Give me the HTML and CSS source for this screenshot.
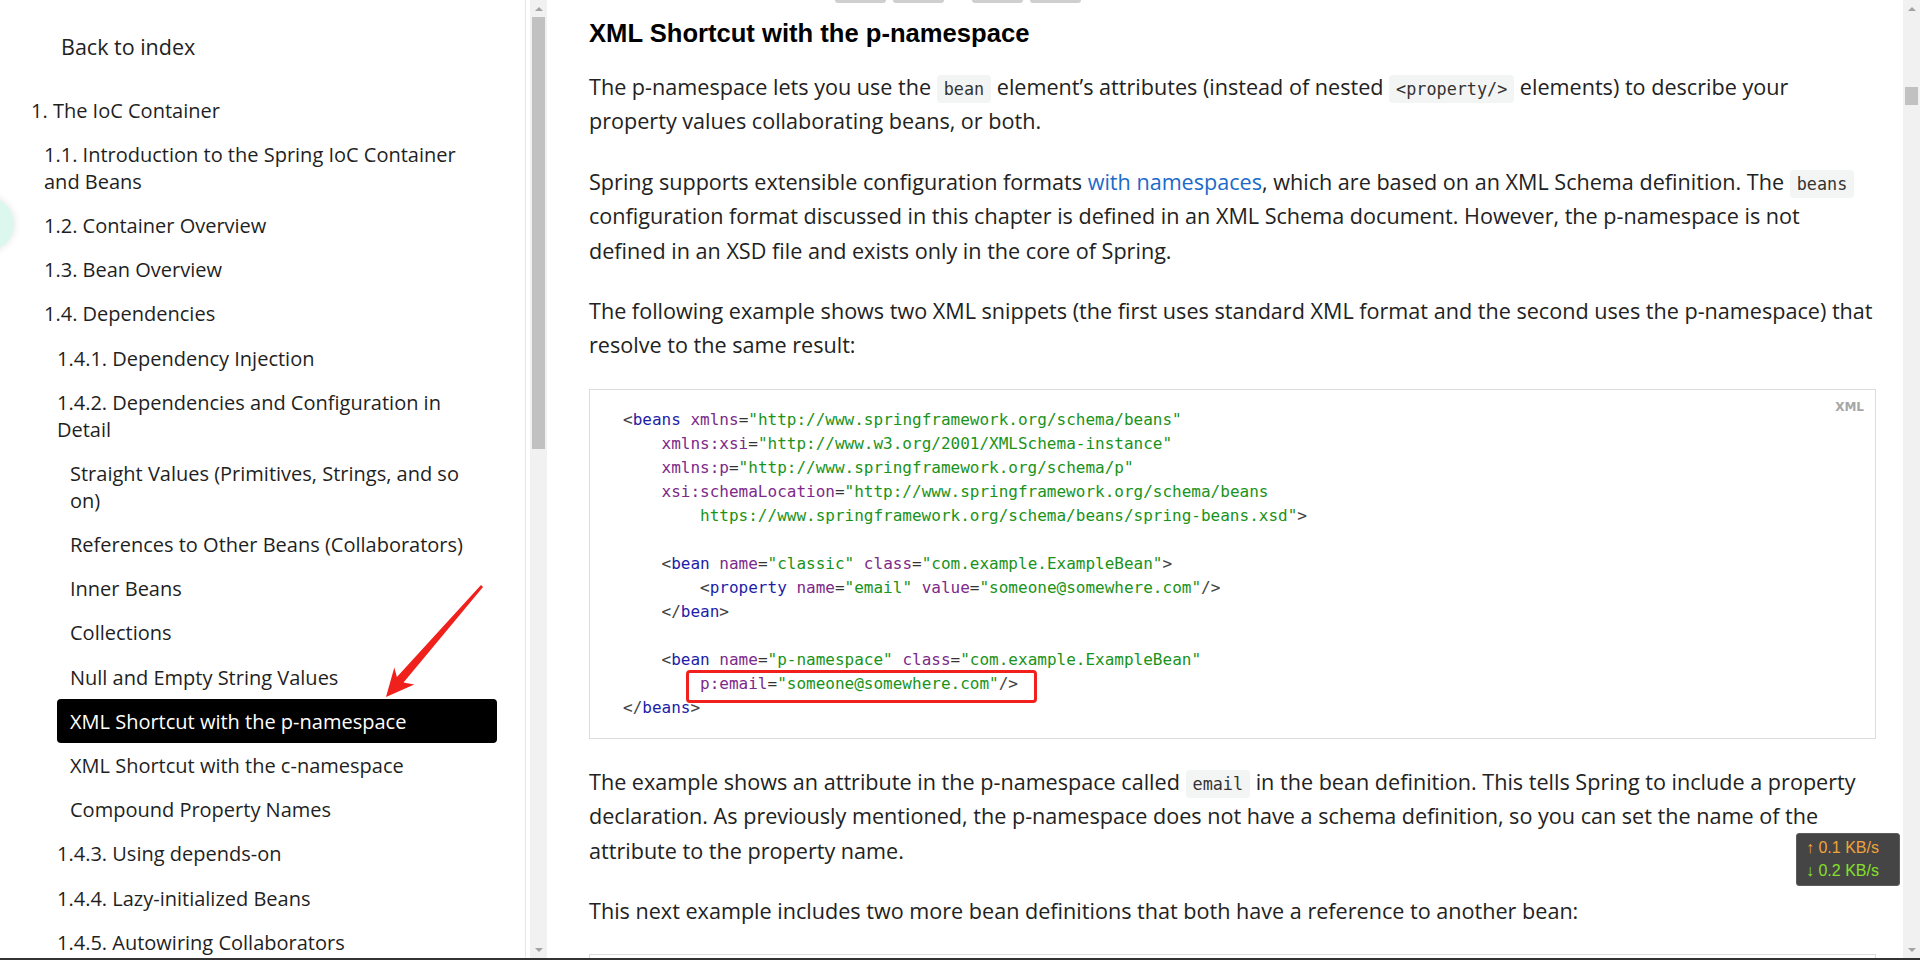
FILE: index.html
```html
<!DOCTYPE html>
<html lang="en">
<head>
<meta charset="utf-8">
<title>The IoC Container</title>
<link rel="stylesheet" href="styles.css">
</head>
<body>
<div class="app">
  <aside class="sidebar">
    <a class="back" href="#">Back to index</a>
    <nav class="toc">
      <ul>
        <li><a href="#">1. The IoC Container</a>
          <ul>
            <li><a href="#">1.1. Introduction to the Spring IoC Container and Beans</a></li>
            <li><a href="#">1.2. Container Overview</a></li>
            <li><a href="#">1.3. Bean Overview</a></li>
            <li><a href="#">1.4. Dependencies</a>
              <ul>
                <li><a href="#">1.4.1. Dependency Injection</a></li>
                <li><a href="#">1.4.2. Dependencies and Configuration in Detail</a>
                  <ul>
                    <li><a href="#">Straight Values (Primitives, Strings, and so on)</a></li>
                    <li><a href="#">References to Other Beans (Collaborators)</a></li>
                    <li><a href="#">Inner Beans</a></li>
                    <li><a href="#">Collections</a></li>
                    <li><a href="#">Null and Empty String Values</a></li>
                    <li><a href="#" class="active">XML Shortcut with the p-namespace</a></li>
                    <li><a href="#">XML Shortcut with the c-namespace</a></li>
                    <li><a href="#">Compound Property Names</a></li>
                  </ul>
                </li>
                <li><a href="#">1.4.3. Using depends-on</a></li>
                <li><a href="#">1.4.4. Lazy-initialized Beans</a></li>
                <li><a href="#">1.4.5. Autowiring Collaborators</a></li>
                <li><a href="#">1.4.6. Method Injection</a></li>
              </ul>
            </li>
          </ul>
        </li>
      </ul>
    </nav>
  </aside>

  <div class="vscroll side-scroll">
    <div class="sbtn"><span class="tri-up"></span></div>
    <div class="thumb"></div>
    <div class="track"></div>
    <div class="sbtn"><span class="tri-down"></span></div>
  </div>

  <main class="main">
    <div class="cut-buttons">
      <span class="cut"></span><span class="cut"></span><span class="cut wide-gap"></span><span class="cut"></span>
    </div>
    <h4 class="sect-title">XML Shortcut with the p-namespace</h4>
    <p>The p-namespace lets you use the <code>bean</code> element’s attributes (instead of nested <code>&lt;property/&gt;</code> elements) to describe your property values collaborating beans, or both.</p>
    <p>Spring supports extensible configuration formats <a href="#" class="link">with namespaces</a>, which are based on an XML Schema definition. The <code>beans</code> configuration format discussed in this chapter is defined in an XML Schema document. However, the p-namespace is not defined in an XSD file and exists only in the core of Spring.</p>
    <p>The following example shows two XML snippets (the first uses standard XML format and the second uses the p-namespace) that resolve to the same result:</p>
    <div class="listing">
      <span class="lang">XML</span>
<pre><span class="p">&lt;</span><span class="t">beans</span> <span class="a">xmlns</span>=<span class="s">"http://www.springframework.org/schema/beans"</span>
    <span class="a">xmlns:xsi</span>=<span class="s">"http://www.w3.org/2001/XMLSchema-instance"</span>
    <span class="a">xmlns:p</span>=<span class="s">"http://www.springframework.org/schema/p"</span>
    <span class="a">xsi:schemaLocation</span>=<span class="s">"http://www.springframework.org/schema/beans
        https://www.springframework.org/schema/beans/spring-beans.xsd"</span><span class="p">&gt;</span>

    <span class="p">&lt;</span><span class="t">bean</span> <span class="a">name</span>=<span class="s">"classic"</span> <span class="a">class</span>=<span class="s">"com.example.ExampleBean"</span><span class="p">&gt;</span>
        <span class="p">&lt;</span><span class="t">property</span> <span class="a">name</span>=<span class="s">"email"</span> <span class="a">value</span>=<span class="s">"someone@somewhere.com"</span><span class="p">/&gt;</span>
    <span class="p">&lt;/</span><span class="t">bean</span><span class="p">&gt;</span>

    <span class="p">&lt;</span><span class="t">bean</span> <span class="a">name</span>=<span class="s">"p-namespace"</span> <span class="a">class</span>=<span class="s">"com.example.ExampleBean"</span>
        <span class="hl"><span class="a">p:email</span>=<span class="s">"someone@somewhere.com"</span><span class="p">/&gt;</span></span>
<span class="p">&lt;/</span><span class="t">beans</span><span class="p">&gt;</span></pre>
    </div>
    <p>The example shows an attribute in the p-namespace called <code>email</code> in the bean definition. This tells Spring to include a property declaration. As previously mentioned, the p-namespace does not have a schema definition, so you can set the name of the attribute to the property name.</p>
    <p>This next example includes two more bean definitions that both have a reference to another bean:</p>
    <div class="listing"><pre> </pre></div>
  </main>

  <div class="vscroll page-scroll">
    <div class="sbtn"><span class="tri-up"></span></div>
    <div class="thumb"></div>
    <div class="track"></div>
    <div class="sbtn"><span class="tri-down"></span></div>
  </div>
</div>
<div class="bottom-edge"></div>

<div class="mint"></div>
<div class="net">
  <div class="up">↑ 0.1 KB/s</div>
  <div class="down">↓ 0.2 KB/s</div>
</div>
<svg class="annot" width="1920" height="960" viewBox="0 0 1920 960">
  <polygon fill="#f0201c" points="386,697 414.3,684.4 403.5,682.4 483,586.9 481,585.1 396.9,677.1 394.3,667.4"/>
</svg>
</body>
</html>
```

FILE: styles.css
```css
* { box-sizing: border-box; }
html, body { margin: 0; padding: 0; height: 100%; overflow: hidden; background: #fff; }
body { font-family: "Open Sans", "Noto Sans", sans-serif; color: #222; }

.app { display: flex; height: 958px; overflow: hidden; }
.bottom-edge { height: 2px; background: #333; }

/* sidebar */
.sidebar { width: 526px; flex: none; border-right: 1px solid #e2e8e8; margin-right: 4px; padding-top: 30px; overflow: hidden; }
.back { display: block; padding-left: 61px; font-size: 21.5px; line-height: 34px; color: #222; text-decoration: none; margin-bottom: 24px; }
.toc ul { list-style: none; margin: 0; padding: 0 0 0 13px; }
.toc > ul { padding: 0 28px 0 18px; }
.toc a { display: block; padding: 8.6px 13px; font-size: 20px; line-height: 27px; color: #1f1f1f; text-decoration: none; border-radius: 4px; }
.toc a.active { background: #000; color: #fff; }

/* fake scrollbars */
.vscroll { width: 17px; flex: none; background: #f1f1f1; display: flex; flex-direction: column; align-items: center; }
.sbtn { width: 17px; height: 17px; flex: none; display: flex; align-items: center; justify-content: center; }
.tri-up { width: 0; height: 0; border-left: 4px solid transparent; border-right: 4px solid transparent; border-bottom: 4px solid #a3a3a3; }
.tri-down { width: 0; height: 0; border-left: 4px solid transparent; border-right: 4px solid transparent; border-top: 4px solid #a3a3a3; }
.thumb { width: 13px; flex: none; background: #c1c1c1; }
.track { flex: 1; }
.side-scroll .thumb { height: 432px; }
.page-scroll .thumb { height: 18px; margin-top: 70px; }

/* main */
.main { flex: 1; min-width: 0; padding: 0 27px 0 42px; overflow: hidden; font-size: 21.6px; line-height: 34.4px; }
.cut-buttons { display: flex; height: 3px; padding-left: 246px; gap: 7px; }
.cut { width: 51px; height: 3px; background: #cfcfcf; border-radius: 0 0 4px 4px; }
.cut.wide-gap { margin-left: 21px; }
.sect-title { margin: 15px 0 22px; font-family: "Liberation Sans", Arial, sans-serif; font-weight: bold; font-size: 25.6px; line-height: 30px; color: #000; }
.main p { margin: 0 0 26px; }
.link { color: #1b6ac9; text-decoration: none; }
code { font-family: "DejaVu Sans Mono", monospace; font-size: 16.8px; line-height: 20px; background: #f3f4f4; color: #333; padding: 4px 7px; border-radius: 4px; }

.listing { position: relative; border: 1px solid #dcdcdc; padding: 18px 33px; margin: 0 0 26px; background: #fff; }
.listing pre { margin: 0; font-family: "DejaVu Sans Mono", monospace; font-size: 16px; line-height: 24px; color: #333; }
.lang { position: absolute; top: 9px; right: 11px; font-family: "DejaVu Sans", sans-serif; font-weight: bold; font-size: 12px; line-height: 16px; color: #a6a6a6; }
.p { color: #444; }
.t { color: #1d1da8; }
.a { color: #7d2a8a; }
.s { color: #1a931a; }
.hl { position: relative; }
.hl::after { content: ""; position: absolute; left: -14px; right: -19px; top: -4px; bottom: -10px; border: 3px solid #f2201c; border-radius: 4px; }

/* overlays */
.mint { position: fixed; left: -40px; top: 197px; width: 54px; height: 54px; border-radius: 50%; background: #dcf8ee; box-shadow: 0 0 8px rgba(0,0,0,0.12); }
.net { position: fixed; left: 1796px; top: 833px; width: 104px; height: 53px; background: #454545; border: 1px solid #5c5c5c; border-radius: 3px; padding: 2px 0 0 9px; font-family: "Liberation Sans Narrow", "Liberation Sans", Arial, sans-serif; font-size: 16px; line-height: 23px; }
.net .up { color: #f0a33a; }
.net .down { color: #84e02a; }
.annot { position: fixed; left: 0; top: 0; pointer-events: none; }
```
